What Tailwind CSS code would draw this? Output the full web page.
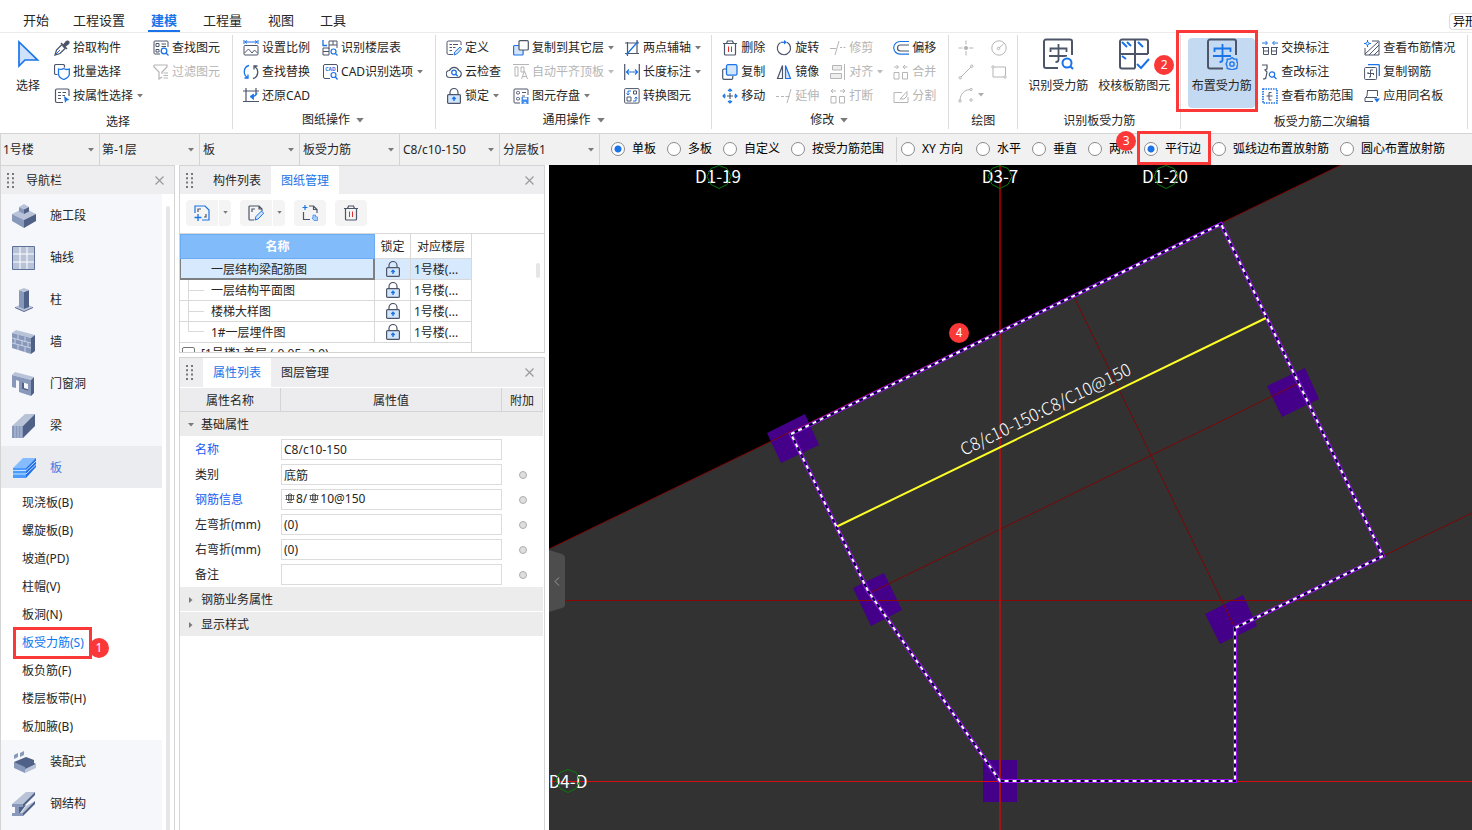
<!DOCTYPE html>
<html lang="zh-CN">
<head>
  <meta charset="UTF-8">
  <meta name="viewport" content="width=device-width, initial-scale=1.0">
  <title>板受力筋 - 建模</title>
  <script src="https://cdn.jsdelivr.net/npm/@tailwindcss/browser@4"></script>
</head>
<body class="flex h-screen flex-col overflow-hidden bg-white font-['Noto_Sans','Noto_Sans_CJK_SC',sans-serif] text-xs leading-4 text-[#262626]">

  <!-- Shared icons -->
  <svg class="hidden">
    <symbol id="lock" viewBox="0 0 16 16" fill="none">
      <path d="M4 7V4.500a4 4 0 0 1 8 0V7" stroke="#4d5569" stroke-width="1.200"/>
      <rect x="1.600" y="6.600" width="12.800" height="8.800" rx="1" fill="#d3e5fb" stroke="#4d5569" stroke-width="1.200"/>
      <path d="M8 13V9.500M6.300 11L8 9.200 9.700 11" stroke="#1a73e8" stroke-width="1.400"/>
    </symbol>
    <symbol id="trash" viewBox="0 0 16 16" fill="none">
      <path d="M1 3.500h14M4.500 3.500l1-2.500h5l1 2.500M2.500 3.500V14a1 1 0 0 0 1 1h9a1 1 0 0 0 1-1V3.500" stroke="#4d5569" stroke-width="1.200"/>
      <path d="M6.500 6.500v5.500M9.500 6.500v5.500" stroke="#e02b2b"/>
    </symbol>
    <symbol id="caret" viewBox="0 0 6 4"><path d="M0 0h6L3 3.500z" fill="#7a7a7a"/></symbol>
    <symbol id="close" viewBox="0 0 9 9"><path d="M.5.5l8 8M8.500.5l-8 8" stroke="#9a9a9a" stroke-width="1.200"/></symbol>
    <symbol id="grip" viewBox="0 0 7 15">
      <path d="M1 0v15M6 0v15" stroke="#777" stroke-width="2" stroke-dasharray="2 2.300"/>
    </symbol>
    <symbol id="rebar" viewBox="0 0 10 12">
      <path d="M5 0v10M2 9.500h6M.5 2.500h9M1.500 2.500v4M8.500 2.500v4M.5 6.500h9M3.500 1v7M6.500 1v7" fill="none" stroke="#444" stroke-width=".8"/>
    </symbol>
  </svg>

  <!-- Menu tabs -->
  <header class="flex h-[33px] shrink-0 items-end border-b border-[#ececec] pl-5 text-[13px]">
    <nav class="flex h-[23px] gap-5">
      <a href="#" class="-mr-0.5 h-full px-[3px] pt-[3px]">开始</a>
      <a href="#" class="h-full px-[3px] pt-[3px]">工程设置</a>
      <a href="#" class="h-full border-b-2 border-[#1a73e8] px-[3px] pt-[3px] font-bold text-[#1a73e8]">建模</a>
      <a href="#" class="h-full px-[3px] pt-[3px]">工程量</a>
      <a href="#" class="h-full px-[3px] pt-[3px]">视图</a>
      <a href="#" class="h-full px-[3px] pt-[3px]">工具</a>
    </nav>
    <button class="mb-0.5 ml-auto h-[17px] w-[23px] overflow-hidden rounded-l border border-r-0 border-[#dcdcdc] pl-[3px] text-left text-xs leading-none whitespace-nowrap text-black">异形</button>
  </header>

  <!-- Ribbon -->
  <section class="flex h-[100px] shrink-0 overflow-x-clip whitespace-nowrap">
    <!-- 选择 -->
    <div class="flex shrink-0 flex-col pt-[3px] pr-3 pl-4">
      <div class="flex h-[72px]">
        <button class="mt-0.5 mr-3.5 flex flex-col items-center gap-2">
          <svg class="h-8 w-6" viewBox="0 0 24 32" fill="none"><path d="M3 4v24l6-6h12.500z" fill="#cfe2fb" stroke="#1a73e8" stroke-width="1.700"/></svg>
          选择
        </button>
        <div class="mr-2.5 flex flex-col">
          <button class="flex h-6 items-center gap-[3px]">
            <svg class="size-4" viewBox="0 0 16 16" fill="none"><path d="M8 4.500L2.500 10 1 15l5-1.500L11.500 8" stroke="#4d5569" stroke-width="1.300"/><path d="M7 3l6 6M9 6l3-4c2-2 4 0 2 2l-4 3z" fill="#4d5569" stroke="#4d5569" stroke-width="1.500"/><path d="M2 14l4-4" stroke="#1a73e8"/></svg>
            拾取构件
          </button>
          <button class="flex h-6 items-center gap-[3px]">
            <svg class="size-4" viewBox="0 0 16 16" fill="none"><path d="M3.500 10.500H2a1.500 1.500 0 0 1-1.500-1.500V2A1.500 1.500 0 0 1 2 .5h7A1.500 1.500 0 0 1 10.500 2v1.500" stroke="#4d5569" stroke-width="1.200"/><path d="M9.800 4.500c2 1.500 3.500 1.200 5.500.5v5c0 2.500-3 4.500-5.500 5.500C7 14.500 4.500 12.500 4.500 10V5c2 .7 3.500.8 5.300-.5z" stroke="#1a73e8" stroke-width="1.300"/></svg>
            批量选择
          </button>
          <button class="flex h-6 items-center gap-[3px]">
            <svg class="size-4" viewBox="0 0 16 16" fill="none"><path d="M9 14.500H3A1.500 1.500 0 0 1 1.500 13V2.500A1.500 1.500 0 0 1 3 1h10.500A1.500 1.500 0 0 1 15 2.500V8M4 4.500h3M8.500 4.500H12M4 7.500h3M8.500 7.500H11M4 10.500h3" stroke="#4d5569" stroke-width="1.200"/><path d="M10 8l5.500 4-2.700.5L11 15z" fill="#1a73e8"/></svg>
            按属性选择
            <svg class="ml-px h-1 w-1.5"><use href="#caret"/></svg>
          </button>
        </div>
        <div class="flex flex-col">
          <button class="flex h-6 items-center gap-[3px]">
            <svg class="size-4" viewBox="0 0 16 16" fill="none"><path d="M7 14H2a1 1 0 0 1-1-1V2a1 1 0 0 1 1-1h12a1 1 0 0 1 1 1v5M8.500 4H13M8.500 6.500H13M3 3.500h3v3H3zM3 9.500h3v2.500H3z" stroke="#4d5569"/><circle cx="11" cy="11" r="2.800" stroke="#1a73e8" stroke-width="1.300"/><path d="M13 13l2.500 2.500" stroke="#1a73e8" stroke-width="1.300"/></svg>
            查找图元
          </button>
          <button class="flex h-6 items-center gap-[3px] text-[#b5b5b5]">
            <svg class="size-4" viewBox="0 0 16 16" fill="none" stroke="#b5b5b5" stroke-width="1.200"><path d="M1 1h13v2L9 8v2M1 1v2l5 5v7l3-2M10.500 9H15M10.500 11.500H15M10.500 14H15"/></svg>
            过滤图元
          </button>
        </div>
      </div>
      <div class="flex h-[26px] items-center justify-center pt-0.5">选择</div>
    </div>
    <div class="mt-0.5 h-[94px] w-px shrink-0 bg-[#dcdcdc]"></div>

    <!-- 图纸操作 -->
    <div class="flex shrink-0 flex-col pt-[3px] pr-3 pl-2.5">
      <div class="flex h-[72px] gap-3">
        <div class="flex flex-col">
          <button class="flex h-6 items-center gap-[3px]">
            <svg class="size-4" viewBox="0 0 16 16" fill="none"><path d="M1 0v4M15 0v4M1.500 2h13M4 .5L2 2l2 1.500M12 .5L14 2l-2 1.500" stroke="#1a73e8"/><rect x="1" y="5.500" width="14" height="9.500" rx="1" stroke="#4d5569"/><path d="M1.500 13l4-4 3.500 4 2.500-3 3 3" stroke="#4d5569"/></svg>
            设置比例
          </button>
          <button class="flex h-6 items-center gap-[3px]">
            <svg class="size-4" viewBox="0 0 16 16" fill="none" stroke-width="1.300"><path d="M6 1.500C0 3 0 11 4.500 13.500M1.500 14h3.500v-3.500" stroke="#1a73e8"/><path d="M10 14.500c6-1.500 6-9.500 1.500-12M14.500 2H11v3.500" stroke="#4d5569"/></svg>
            查找替换
          </button>
          <button class="flex h-6 items-center gap-[3px]">
            <svg class="size-4" viewBox="0 0 16 16" fill="none"><path d="M0 3h16M3 0v14M13 0v6M0 13.500h16" stroke="#4d5569" stroke-width="1.200"/><path d="M14 4.500c0 2.500-1.500 4-4 4M10.500 6l-3.500 2.500 3.500 3z" fill="#1a73e8" stroke="#1a73e8" stroke-width=".8"/></svg>
            还原CAD
          </button>
        </div>
        <div class="flex flex-col">
          <button class="flex h-6 items-center gap-[3px]">
            <svg class="size-4" viewBox="0 0 16 16" fill="none"><path d="M1 0v5.500h4" stroke="#1a73e8" stroke-width="1.300"/><path d="M7 1h8v7M7 1v8M11 1v4M7 5h8M1 8h6v7M1 8v7h6M1 11.500h6" stroke="#4d5569"/><circle cx="11.500" cy="11.500" r="2.500" stroke="#1a73e8" stroke-width="1.200"/><path d="M13.500 13.500l2 2" stroke="#1a73e8" stroke-width="1.300"/></svg>
            识别楼层表
          </button>
          <button class="flex h-6 items-center gap-[3px]">
            <svg class="size-4" viewBox="0 0 16 16" fill="none"><path d="M8 14.500H3A1.500 1.500 0 0 1 1.500 13V2A1.500 1.500 0 0 1 3 .5h11A1.500 1.500 0 0 1 15.500 2v6" stroke="#4d5569"/><text x="8.500" y="7" font-size="5" font-weight="700" text-anchor="middle" fill="#1a73e8">CAD</text><circle cx="11.500" cy="11" r="2.500" stroke="#1a73e8" stroke-width="1.200"/><path d="M13.500 13l2 2.500" stroke="#1a73e8" stroke-width="1.300"/></svg>
            CAD识别选项
            <svg class="ml-px h-1 w-1.5"><use href="#caret"/></svg>
          </button>
        </div>
      </div>
      <div class="flex h-6 items-center justify-center gap-1.5">图纸操作 <svg class="h-[5px] w-2"><use href="#caret"/></svg></div>
    </div>
    <div class="mt-0.5 h-[94px] w-px shrink-0 bg-[#dcdcdc]"></div>

    <!-- 通用操作 -->
    <div class="flex shrink-0 flex-col px-2.5 pt-[3px]">
      <div class="flex h-[72px]">
        <div class="mr-3 flex flex-col">
          <button class="flex h-6 items-center gap-[3px]">
            <svg class="size-4" viewBox="0 0 16 16" fill="none"><path d="M7 14.500H2.500A1.500 1.500 0 0 1 1 13V2.500A1.500 1.500 0 0 1 2.500 1h11A1.500 1.500 0 0 1 15 2.500V5M3.500 4.500H6M7 4.500h5M3.500 7.500H6M7 7.500h2.500M3.500 10.500H6" stroke="#4d5569"/><path d="M8 15l.7-3L14 7l1.700 1.800-5 5.200z" fill="#d3e5fb" stroke="#1a73e8"/></svg>
            定义
          </button>
          <button class="flex h-6 items-center gap-[3px]">
            <svg class="size-4" viewBox="0 0 16 16" fill="none"><path d="M4 13.500a3.500 3.500 0 0 1-.5-7 5 5 0 0 1 9.300 0 3.600 3.600 0 0 1-.8 7z" stroke="#4d5569" stroke-width="1.200"/><circle cx="8" cy="8.500" r="2.300" stroke="#1a73e8" stroke-width="1.300"/><path d="M9.700 10.200l2 2" stroke="#1a73e8" stroke-width="1.300"/></svg>
            云检查
          </button>
          <button class="flex h-6 items-center gap-[3px]">
            <svg class="size-4"><use href="#lock"/></svg>
            锁定
            <svg class="ml-px h-1 w-1.5"><use href="#caret"/></svg>
          </button>
        </div>
        <div class="mr-2.5 flex flex-col">
          <button class="flex h-6 items-center gap-[3px]">
            <svg class="size-4" viewBox="0 0 16 16" fill="none"><rect x=".6" y="5.500" width="9.500" height="9.500" rx="1" fill="#d3e5fb" stroke="#1a73e8" stroke-width="1.200"/><rect x="6" y=".7" width="9.300" height="9.300" rx="1" fill="#fff" stroke="#4d5569" stroke-width="1.200"/></svg>
            复制到其它层
            <svg class="ml-px h-1 w-1.5"><use href="#caret"/></svg>
          </button>
          <button class="flex h-6 items-center gap-[3px] text-[#b5b5b5]">
            <svg class="size-4" viewBox="0 0 16 16" fill="none" stroke="#b5b5b5"><path d="M0 .5h16M2 3h3v9H2zM8 3h3v5H8zM8.500 15l3-8 3 8M9.500 12.500h4"/></svg>
            自动平齐顶板
            <svg class="ml-px h-1 w-1.5 opacity-50"><use href="#caret"/></svg>
          </button>
          <button class="flex h-6 items-center gap-[3px]">
            <svg class="size-4" viewBox="0 0 16 16" fill="none"><path d="M7 15H2a1 1 0 0 1-1-1V2a1 1 0 0 1 1-1h12a1 1 0 0 1 1 1v5M9 4.500h4M9 8h3" stroke="#4d5569"/><rect x="3.500" y="3.500" width="3" height="2.500" rx="1" stroke="#4d5569"/><rect x="3.500" y="9.500" width="3" height="2.500" rx="1" stroke="#4d5569"/><rect x="8.500" y="9" width="7" height="7" fill="#3d8bf0"/><path d="M10 9.500h4v2h-4zM10 15.500l2-2 2 2z" fill="#fff"/></svg>
            图元存盘
            <svg class="ml-px h-1 w-1.5"><use href="#caret"/></svg>
          </button>
        </div>
        <div class="flex flex-col">
          <button class="flex h-6 items-center gap-[3px]">
            <svg class="size-4" viewBox="0 0 16 16" fill="none"><path d="M3.500 2v14M13 0v13M1 3h14M1 13.500h14" stroke="#4d5569" stroke-width="1.200"/><path d="M2.500 14.500L14 1.500" stroke="#1a73e8" stroke-width="1.300"/></svg>
            两点辅轴
            <svg class="ml-px h-1 w-1.5"><use href="#caret"/></svg>
          </button>
          <button class="flex h-6 items-center gap-[3px]">
            <svg class="size-4" viewBox="0 0 16 16" fill="none"><path d="M.7 0v16M15.300 0v16" stroke="#4d5569" stroke-width="1.200"/><path d="M2.500 8h11M5 5.500L2.500 8 5 10.500M11 5.500L13.500 8 11 10.500" stroke="#1a73e8" stroke-width="1.200"/></svg>
            长度标注
            <svg class="ml-px h-1 w-1.5"><use href="#caret"/></svg>
          </button>
          <button class="flex h-6 items-center gap-[3px]">
            <svg class="size-4" viewBox="0 0 16 16" fill="none"><rect x=".6" y=".6" width="14.500" height="14.500" rx="1" stroke="#4d5569"/><path d="M9.500 3h3v3h-3zM3 9h4v4H3z" stroke="#4d5569"/><path d="M7 3H4v4M2.500 5.500L4 7l1.500-1.500M9 13h3V9M10.500 10.500L12 9l1.500 1.500" stroke="#1a73e8"/></svg>
            转换图元
          </button>
        </div>
      </div>
      <div class="flex h-6 items-center justify-center gap-1.5">通用操作 <svg class="h-[5px] w-2"><use href="#caret"/></svg></div>
    </div>
    <div class="mt-0.5 h-[94px] w-px shrink-0 bg-[#dcdcdc]"></div>

    <!-- 修改 -->
    <div class="flex shrink-0 flex-col pt-[3px] pr-3 pl-2.5">
      <div class="flex h-[72px] gap-[11px]">
        <div class="flex flex-col">
          <button class="flex h-6 items-center gap-[3px]"><svg class="size-4"><use href="#trash"/></svg>删除</button>
          <button class="flex h-6 items-center gap-[3px]">
            <svg class="size-4" viewBox="0 0 16 16" fill="none"><path d="M4 5H2a1.300 1.300 0 0 0-1.300 1.300V14A1.300 1.300 0 0 0 2 15.300h7.500a1.300 1.300 0 0 0 1.300-1.300v-2" stroke="#4d5569" stroke-width="1.200"/><rect x="4.500" y=".7" width="10.500" height="10.500" rx="1.500" fill="#d3e5fb" stroke="#1a73e8" stroke-width="1.300"/></svg>
            复制
          </button>
          <button class="flex h-6 items-center gap-[3px]">
            <svg class="size-4" viewBox="0 0 16 16" fill="none"><path d="M8 5v6M5 8h6" stroke="#4d5569" stroke-width="1.200"/><path d="M6 3L8 1l2 2M6 13l2 2 2-2M3 6L1 8l2 2M13 6l2 2-2 2M8 1v3M8 15v-3M1 8h3M15 8h-3" stroke="#1a73e8" stroke-width="1.200"/></svg>
            移动
          </button>
        </div>
        <div class="flex flex-col">
          <button class="flex h-6 items-center gap-[3px]">
            <svg class="size-4" viewBox="0 0 16 16" fill="none"><path d="M11 2.300a6.600 6.600 0 1 1-6.500.2" stroke="#4d5569" stroke-width="1.200"/><path d="M5 2.300h4" stroke="#1a73e8" stroke-width="1.200"/><path d="M8 0l3 2.300L8 4.600z" fill="#1a73e8"/></svg>
            旋转
          </button>
          <button class="flex h-6 items-center gap-[3px]">
            <svg class="size-4" viewBox="0 0 16 16" fill="none"><path d="M6.500 1.500V14.500H1.500z" stroke="#4d5569" stroke-width="1.200"/><path d="M9.500 1.500V14.500h5z" fill="#d3e5fb" stroke="#1a73e8" stroke-width="1.200"/></svg>
            镜像
          </button>
          <button class="flex h-6 items-center gap-[3px] text-[#b5b5b5]">
            <svg class="size-4" viewBox="0 0 16 16" fill="none" stroke="#b5b5b5"><path d="M0 8.500h3M5 8.500h3M9.500 8.500h4M15 1l-4 14"/></svg>
            延伸
          </button>
        </div>
        <div class="flex flex-col text-[#b5b5b5]">
          <button class="flex h-6 items-center gap-[3px]">
            <svg class="size-4" viewBox="0 0 16 16" fill="none" stroke="#b5b5b5"><path d="M0 8.500h6M10 7.500h2M13.500 7.500h2M9 1L5 15"/></svg>
            修剪
          </button>
          <button class="flex h-6 items-center gap-[3px]">
            <svg class="size-4" viewBox="0 0 16 16" fill="#eee" stroke="#b5b5b5"><path d="M14.500 0v16M2.500 1.500h9v4.500h-9zM.5 9.500h11v5H.5z"/></svg>
            对齐
            <svg class="ml-px h-1 w-1.5 opacity-50"><use href="#caret"/></svg>
          </button>
          <button class="flex h-6 items-center gap-[3px]">
            <svg class="size-4" viewBox="0 0 16 16" fill="none" stroke="#b5b5b5"><path d="M1 8.500h5V15H1zM9.500 8.500h5V15h-5zM1 3h5M3 1L1 3l2 2M10 3h5M13 1l2 2-2 2"/></svg>
            打断
          </button>
        </div>
        <div class="-ml-px flex flex-col text-[#b5b5b5]">
          <button class="flex h-6 items-center gap-[3px] text-[#262626]">
            <svg class="size-4" viewBox="0 0 16 16" fill="none"><path d="M16 1.500H7a6.300 6.300 0 0 0 0 12.600h9" stroke="#1a73e8" stroke-width="1.200"/><path d="M16 5H7.500a3 3 0 0 0 0 6H16" stroke="#4d5569" stroke-width="1.200"/></svg>
            偏移
          </button>
          <button class="flex h-6 items-center gap-[3px]">
            <svg class="size-4" viewBox="0 0 16 16" fill="none" stroke="#b5b5b5"><path d="M1 8.500h5V15H1zM9.500 8.500h5V15h-5zM1 3h4M3.500 1l2 2-2 2M10.500 3h4M12 1l-2 2 2 2"/></svg>
            合并
          </button>
          <button class="flex h-6 items-center gap-[3px]">
            <svg class="size-4" viewBox="0 0 16 16" fill="none" stroke="#b5b5b5"><path d="M9 4.500H1v10h14V9M7 11l7-7.500V8l-3 3z"/></svg>
            分割
          </button>
        </div>
      </div>
      <div class="flex h-6 items-center justify-center gap-1.5">修改 <svg class="h-[5px] w-2"><use href="#caret"/></svg></div>
    </div>
    <div class="mt-0.5 h-[94px] w-px shrink-0 bg-[#dcdcdc]"></div>

    <!-- 绘图 -->
    <div class="flex shrink-0 flex-col px-[9px] pt-[3px]">
      <div class="grid h-[72px] grid-cols-[16px_17px] gap-x-[17px]">
        <button aria-label="点"><svg class="size-4" viewBox="0 0 16 16" stroke="#b5b5b5"><path d="M8 .5v4M8 11v4.500M.5 8h4M11 8h4.500"/><circle cx="8" cy="8" r="1.600" fill="#b5b5b5"/></svg></button>
        <button aria-label="圆"><svg class="size-4" viewBox="0 0 16 16" fill="none" stroke="#b5b5b5"><circle cx="8" cy="8" r="7.200"/><path d="M8 8l4.500-4"/><circle cx="7.500" cy="8.500" r="1.200"/></svg></button>
        <button aria-label="直线"><svg class="size-4" viewBox="0 0 16 16" fill="none" stroke="#b5b5b5"><path d="M3 13L13 3"/><circle cx="2.200" cy="13.800" r="1.200"/><circle cx="13.800" cy="2.200" r="1.200"/></svg></button>
        <button aria-label="矩形"><svg class="size-4" viewBox="0 0 16 16" fill="none" stroke="#b5b5b5"><path d="M3.500 3h11v8.500M12.500 13H2V4.500"/><circle cx="2" cy="3" r="1.200"/><circle cx="14" cy="13" r="1.200"/></svg></button>
        <button aria-label="弧" class="flex items-center gap-1">
          <svg class="size-4 shrink-0" viewBox="0 0 16 16" fill="none" stroke="#b5b5b5"><path d="M2 13C2.500 7 6 3 12 2.500"/><circle cx="2" cy="14" r="1.200"/><circle cx="13" cy="2.500" r="1.200"/><circle cx="13" cy="13" r="1.200"/></svg>
          <svg class="h-1 w-1.5 shrink-0 opacity-60"><use href="#caret"/></svg>
        </button>
      </div>
      <div class="flex h-[26px] items-center justify-center pt-0.5">绘图</div>
    </div>
    <div class="mt-0.5 h-[94px] w-px shrink-0 bg-[#dcdcdc]"></div>

    <!-- 识别板受力筋 -->
    <div class="flex shrink-0 flex-col px-2.5 pt-[3px]">
      <div class="flex h-[72px] gap-2.5">
        <button class="mt-0.5 flex flex-col items-center gap-2">
          <svg class="size-8" viewBox="0 0 32 32" fill="none"><path d="M16 30H4a2 2 0 0 1-2-2V3.500a2 2 0 0 1 2-2h24a2 2 0 0 1 2 2V17" stroke="#4d5569" stroke-width="2"/><path d="M16.500 6v16q0 2-3 2M8.500 14v-3.500h16V14M7 18h18" stroke="#4d5569" stroke-width="1.800"/><circle cx="25" cy="25" r="6.500" fill="#fff"/><circle cx="25" cy="25" r="4.500" stroke="#1a73e8" stroke-width="2"/><path d="M28 28l3 3" stroke="#1a73e8" stroke-width="2"/></svg>
          识别受力筋
        </button>
        <button class="relative mt-0.5 flex flex-col items-center gap-2">
          <svg class="size-8" viewBox="0 0 32 32" fill="none"><path d="M17 30.500H4a2 2 0 0 1-2-2v-25a2 2 0 0 1 2-2h24a2 2 0 0 1 2 2V16M17 1.500v29M2 16h28" stroke="#4d5569" stroke-width="2"/><path d="M4 4l5 5M9 4l4 4M20 4l5 5M4 18l4 3M19 26l4 4 8-9" stroke="#1a73e8" stroke-width="2"/></svg>
          校核板筋图元
          <span class="absolute top-[17px] -right-1 flex size-5 items-center justify-center rounded-full bg-[#fb3838] text-white">2</span>
        </button>
      </div>
      <div class="flex h-[26px] items-center justify-center pt-0.5">识别板受力筋</div>
    </div>
    <div class="mt-0.5 h-[94px] w-px shrink-0 bg-[#dcdcdc]"></div>

    <!-- 板受力筋二次编辑 -->
    <div class="flex shrink-0 flex-col pt-[3px] pr-3 pl-[7px]">
      <div class="flex h-[72px]">
        <button class="relative mt-0.5 mr-[7px] flex w-[67px] flex-col items-center gap-2 rounded-sm bg-[#c3daf2]">
          <svg class="size-8" viewBox="0 0 32 32" fill="none"><path d="M17 30.500H4a2 2 0 0 1-2-2v-25a2 2 0 0 1 2-2h24a2 2 0 0 1 2 2V17" stroke="#4d5569" stroke-width="2"/><path d="M16.500 6v16q0 2-3 2M8.500 14v-3.500h16V14M7 18h18" stroke="#1a73e8" stroke-width="1.800"/><path d="M26 19.500l2 1.500 2.800.2.200 2.800 1 2-1 2-.2 2.500-2.800.5-2 1-2-1-2.800-.5-.2-2.500-1-2 1-2 .2-2.800 2.800-.2z" fill="#c3daf2" stroke="#1a73e8" stroke-width="1.300"/><circle cx="26" cy="26" r="2.200" stroke="#1a73e8" stroke-width="1.300"/></svg>
          布置受力筋
          <span class="absolute -top-2 -right-[3px] -bottom-1 -left-3 border-3 border-[#fb3838]"></span>
        </button>
        <div class="mr-[11px] flex flex-col">
          <button class="flex h-6 items-center gap-[3px]">
            <svg class="size-4" viewBox="0 0 16 16" fill="none"><path d="M0 3h5M3.500 1l2 2-2 2M16 3h-5M12.500 1l-2 2 2 2" stroke="#1a73e8"/><path d="M1.500 7.500v7h5v-7zM9.500 7.500v7h5v-7zM0 7.500h7M9 7.500h7M1.500 11h5M9.500 11h5" stroke="#4d5569"/></svg>
            交换标注
          </button>
          <button class="flex h-6 items-center gap-[3px]">
            <svg class="size-4" viewBox="0 0 16 16" fill="none"><path d="M0 1h5v4l-2 1 2 2-1 5q0 2-3 2" stroke="#4d5569" stroke-width="1.200"/><circle cx="10" cy="10.500" r="2.700" stroke="#1a73e8" stroke-width="1.200"/><path d="M12 12.500l2.500 2.500" stroke="#1a73e8" stroke-width="1.300"/></svg>
            查改标注
          </button>
          <button class="flex h-6 items-center gap-[3px]">
            <svg class="size-4" viewBox="0 0 16 16" fill="none"><rect x="1" y="1" width="14" height="14" stroke="#1a73e8" stroke-width="1.700" stroke-dasharray="1.500 1"/><path d="M9.500 4.500H7v7.500h2.500M4.500 8h6" stroke="#4d5569"/></svg>
            查看布筋范围
          </button>
        </div>
        <div class="flex flex-col">
          <button class="flex h-6 items-center gap-[3px]">
            <svg class="size-4" viewBox="0 0 16 16" fill="none"><path d="M8 1h7v14H1V8M1 14L14 2M5 15L15 5M10 15l5-5" stroke="#4d5569"/><circle cx="3.500" cy="3.500" r="1.500" stroke="#1a73e8"/><path d="M3.500 0v2M3.500 5v2M0 3.500h2M5 3.500h2" stroke="#1a73e8"/></svg>
            查看布筋情况
          </button>
          <button class="flex h-6 items-center gap-[3px]">
            <svg class="size-4" viewBox="0 0 16 16" fill="none"><path d="M4 .7h10.500a.8.8 0 0 1 .8.8V12" stroke="#1a73e8" stroke-width="1.300"/><rect x=".6" y="3.500" width="12" height="12" rx="1" stroke="#4d5569"/><path d="M9 6H6.500v7H5M3.500 9.500h6.500M4 8v1.500M9.500 9.500V11" stroke="#4d5569"/></svg>
            复制钢筋
          </button>
          <button class="flex h-6 items-center gap-[3px]">
            <svg class="size-4" viewBox="0 0 16 16" fill="none"><path d="M3 2.500h10.500V8M1 9.500h12M3.500 2.500L3 8l-2 2v3.500h8" stroke="#4d5569"/><path d="M10 10.500h6l-3 4z" fill="#1a73e8"/></svg>
            应用同名板
          </button>
        </div>
      </div>
      <div class="flex h-[26px] items-center justify-center pt-0.5">板受力筋二次编辑</div>
    </div>
    <div class="mt-0.5 h-[94px] w-px shrink-0 bg-[#dcdcdc]"></div>
  </section>

  <!-- Option bar -->
  <section class="flex h-8 shrink-0 items-stretch border-t border-[#d4d4d4] bg-[#f1f1f1] whitespace-nowrap">
    <label class="relative flex w-[100px] shrink-0 items-center border-x border-[#d4d4d4]">
      <select aria-label="楼栋" class="h-full w-full appearance-none pl-0.5 outline-none"><option>1号楼</option></select>
      <svg class="pointer-events-none absolute right-[5px] h-1 w-1.5"><use href="#caret"/></svg>
    </label>
    <label class="relative flex w-[100px] shrink-0 items-center border-r border-[#d4d4d4]">
      <select aria-label="楼层" class="h-full w-full appearance-none pl-0.5 outline-none"><option>第-1层</option></select>
      <svg class="pointer-events-none absolute right-[5px] h-1 w-1.5"><use href="#caret"/></svg>
    </label>
    <label class="relative flex w-[100px] shrink-0 items-center border-r border-[#d4d4d4]">
      <select aria-label="构件类别" class="h-full w-full appearance-none pl-[3px] outline-none"><option>板</option></select>
      <svg class="pointer-events-none absolute right-[5px] h-1 w-1.5"><use href="#caret"/></svg>
    </label>
    <label class="relative flex w-[100px] shrink-0 items-center border-r border-[#d4d4d4]">
      <select aria-label="构件类型" class="h-full w-full appearance-none pl-[3px] outline-none"><option>板受力筋</option></select>
      <svg class="pointer-events-none absolute right-[5px] h-1 w-1.5"><use href="#caret"/></svg>
    </label>
    <label class="relative flex w-[100px] shrink-0 items-center border-r border-[#d4d4d4]">
      <select aria-label="构件" class="h-full w-full appearance-none pl-[3px] outline-none"><option>C8/c10-150</option></select>
      <svg class="pointer-events-none absolute right-[5px] h-1 w-1.5"><use href="#caret"/></svg>
    </label>
    <label class="relative flex w-[100px] shrink-0 items-center border-r border-[#d4d4d4]">
      <select aria-label="分层" class="h-full w-full appearance-none pl-[3px] outline-none"><option>分层板1</option></select>
      <svg class="pointer-events-none absolute right-[5px] h-1 w-1.5"><use href="#caret"/></svg>
    </label>

    <div class="flex items-center gap-[11px] pr-3 pb-0.5 pl-[11px] text-black">
      <label class="flex items-center gap-[7px]"><input type="radio" name="range" checked class="size-3.5 appearance-none rounded-full border border-[#8a8a8a] bg-white checked:bg-[radial-gradient(circle,#1a73e8_0_3px,#fff_4px)]">单板</label>
      <label class="flex items-center gap-[7px]"><input type="radio" name="range" class="size-3.5 appearance-none rounded-full border border-[#8a8a8a] bg-white checked:bg-[radial-gradient(circle,#1a73e8_0_3px,#fff_4px)]">多板</label>
      <label class="flex items-center gap-[7px]"><input type="radio" name="range" class="size-3.5 appearance-none rounded-full border border-[#8a8a8a] bg-white checked:bg-[radial-gradient(circle,#1a73e8_0_3px,#fff_4px)]">自定义</label>
      <label class="flex items-center gap-[7px]"><input type="radio" name="range" class="size-3.5 appearance-none rounded-full border border-[#8a8a8a] bg-white checked:bg-[radial-gradient(circle,#1a73e8_0_3px,#fff_4px)]">按受力筋范围</label>
    </div>
    <div class="my-[3px] w-px shrink-0 bg-[#d0d0d0]"></div>
    <div class="flex items-center gap-[11px] pb-0.5 pl-1 text-black">
      <label class="flex items-center gap-[7px] pr-0.5"><input type="radio" name="direction" class="size-3.5 appearance-none rounded-full border border-[#8a8a8a] bg-white checked:bg-[radial-gradient(circle,#1a73e8_0_3px,#fff_4px)]">XY 方向</label>
      <label class="flex items-center gap-[7px]"><input type="radio" name="direction" class="size-3.5 appearance-none rounded-full border border-[#8a8a8a] bg-white checked:bg-[radial-gradient(circle,#1a73e8_0_3px,#fff_4px)]">水平</label>
      <label class="flex items-center gap-[7px]"><input type="radio" name="direction" class="size-3.5 appearance-none rounded-full border border-[#8a8a8a] bg-white checked:bg-[radial-gradient(circle,#1a73e8_0_3px,#fff_4px)]">垂直</label>
      <label class="flex items-center gap-[7px]"><input type="radio" name="direction" class="size-3.5 appearance-none rounded-full border border-[#8a8a8a] bg-white checked:bg-[radial-gradient(circle,#1a73e8_0_3px,#fff_4px)]">两点</label>
      <label class="relative flex items-center gap-[7px]"><input type="radio" name="direction" checked class="size-3.5 appearance-none rounded-full border border-[#8a8a8a] bg-white checked:bg-[radial-gradient(circle,#1a73e8_0_3px,#fff_4px)]">平行边
        <span class="absolute -top-2.5 -right-2.5 -bottom-2 -left-[7px] border-3 border-[#fb3838]"></span>
        <span class="absolute -top-2.5 -left-7 flex size-5 items-center justify-center rounded-full bg-[#fb3838] text-white">3</span>
      </label>
      <label class="flex items-center gap-[7px]"><input type="radio" name="direction" class="size-3.5 appearance-none rounded-full border border-[#8a8a8a] bg-white checked:bg-[radial-gradient(circle,#1a73e8_0_3px,#fff_4px)]">弧线边布置放射筋</label>
      <label class="flex items-center gap-[7px]"><input type="radio" name="direction" class="size-3.5 appearance-none rounded-full border border-[#8a8a8a] bg-white checked:bg-[radial-gradient(circle,#1a73e8_0_3px,#fff_4px)]">圆心布置放射筋</label>
    </div>
  </section>

  <main class="flex min-h-0 flex-1 gap-1">
    <!-- Navigation -->
    <aside class="flex w-[175px] shrink-0 flex-col border-x border-t border-[#d4d4d4]">
      <div class="flex h-7 shrink-0 items-center bg-[#eeeef0] pt-px pr-2.5 pl-1.5">
        <svg class="mr-3 h-[15px] w-[7px]"><use href="#grip"/></svg>
        导航栏
        <button class="ml-auto" aria-label="关闭"><svg class="size-[9px]"><use href="#close"/></svg></button>
      </div>
      <div class="flex min-h-0 flex-1">
        <ul class="min-w-0 flex-1 overflow-hidden bg-[#f5f7fa]">
          <li><a href="#" class="flex h-[42px] items-center gap-3.5 pt-px pl-[11px]">
            <svg class="size-6" viewBox="0 0 24 24"><path d="M0 10l12-6 12 6-12 6z" fill="#b9c3d8"/><path d="M0 10l12 6v8L0 17z" fill="#8798bb"/><path d="M24 10l-12 6v8l12-7z" fill="#4f6187"/><path d="M7 3l5-3 5 3-5 2.500z" fill="#b9c3d8"/><path d="M7 3l5 2.500V10L7 7.500z" fill="#8798bb"/><path d="M17 3l-5 2.500V10l5-2.500z" fill="#4f6187"/></svg>
            施工段</a></li>
          <li><a href="#" class="flex h-[42px] items-center gap-3.5 pt-px pl-[11px]">
            <svg class="size-6" viewBox="0 0 24 24"><path d="M.5.5h22v23H.5z" fill="#b9c3d8" stroke="#5f7199"/><path d="M8 1v22M15 1v22M1 8h21M1 16h21" stroke="#fff"/></svg>
            轴线</a></li>
          <li><a href="#" class="flex h-[42px] items-center gap-3.5 pt-px pl-[11px]">
            <svg class="size-6" viewBox="0 0 24 24"><path d="M3 19l9-4 9 4-9 4z" fill="#b9c3d8"/><path d="M3 19l9 4 9-4v1l-9 4-9-4z" fill="#4f6187"/><path d="M7 2l5 2v17l-5-2z" fill="#8798bb"/><path d="M17 2l-5 2v17l5-2z" fill="#4f6187"/><path d="M7 2l5-2 5 2-5 2z" fill="#b9c3d8"/></svg>
            柱</a></li>
          <li><a href="#" class="flex h-[42px] items-center gap-3.5 pt-px pl-[11px]">
            <svg class="size-6" viewBox="0 0 24 24"><path d="M0 3l4-3 19 5-4 3z" fill="#b9c3d8"/><path d="M0 3l19 5v16L0 18z" fill="#8798bb"/><path d="M19 8l4-3v16l-4 3z" fill="#4f6187"/><path d="M0 8l19 5M0 13l19 5M6 5v5M13 7v5M3 9v5M10 11v5M16 12v5M6 15v5M13 17v5" stroke="#c9d1e2" fill="none"/></svg>
            墙</a></li>
          <li><a href="#" class="flex h-[42px] items-center gap-3.5 pt-px pl-[11px]">
            <svg class="size-6" viewBox="0 0 24 24"><path d="M0 3l3-3 19 5-3 3z" fill="#b9c3d8"/><path fill-rule="evenodd" d="M0 3l19 5v16l-12-4V9L4 8v8l-4-1zM10 10v7l6 2v-7z" fill="#8798bb"/><path d="M19 8l3-3v16l-3 3zM10 10l2 .7V16l4 1.300V19l-6-2z" fill="#4f6187"/></svg>
            门窗洞</a></li>
          <li><a href="#" class="flex h-[42px] items-center gap-3.5 pt-px pl-[11px]">
            <svg class="size-6" viewBox="0 0 24 24"><path d="M0 12L13 0h10L11 12z" fill="#b9c3d8"/><path d="M0 12h11v12H0z" fill="#8798bb"/><path d="M11 12L23 0v12L11 24z" fill="#4f6187"/><path d="M3 12v12M6 12v12M9 12v12" stroke="#b9c3d8"/></svg>
            梁</a></li>
          <li>
            <a href="#" class="flex h-[42px] items-center gap-3.5 bg-[#ebecf0] pt-px pl-[11px] text-[#4577e0]">
              <svg class="size-6" viewBox="0 0 24 24"><path d="M1 12L11 2h13L14 12z" fill="#84bcff"/><path d="M1 12h13v10H1z" fill="#4c9cff"/><path d="M14 12L24 2v9L14 22z" fill="#1f6fe5"/><path d="M1 14.500h13L24 5M1 18h13L24 8.500" stroke="#c6e0ff" fill="none"/></svg>
              板</a>
            <ul class="bg-white">
              <li><a href="#" class="flex h-7 items-center pt-0.5 pl-[21px]">现浇板(B)</a></li>
              <li><a href="#" class="flex h-7 items-center pt-0.5 pl-[21px]">螺旋板(B)</a></li>
              <li><a href="#" class="flex h-7 items-center pt-0.5 pl-[21px]">坡道(PD)</a></li>
              <li><a href="#" class="flex h-7 items-center pt-0.5 pl-[21px]">柱帽(V)</a></li>
              <li><a href="#" class="flex h-7 items-center pt-0.5 pl-[21px]">板洞(N)</a></li>
              <li><a href="#" class="relative flex h-7 items-center pt-0.5 pl-[21px] text-[#0a78f0]">板受力筋(S)
                <span class="absolute -top-px left-3 h-8 w-[79px] border-3 border-[#fb3838]"></span>
                <span class="absolute top-2.5 left-[88px] flex size-5 items-center justify-center rounded-full bg-[#fb3838] text-white">1</span></a></li>
              <li><a href="#" class="flex h-7 items-center pt-0.5 pl-[21px]">板负筋(F)</a></li>
              <li><a href="#" class="flex h-7 items-center pt-0.5 pl-[21px]">楼层板带(H)</a></li>
              <li><a href="#" class="flex h-7 items-center pt-0.5 pl-[21px]">板加腋(B)</a></li>
            </ul>
          </li>
          <li><a href="#" class="flex h-[42px] items-center gap-3.5 pt-px pl-[11px]">
            <svg class="size-6" viewBox="0 0 24 24"><path d="M2 12l12-5 8 3v3l2 1-11 6-11-5z" fill="#4f6187"/><path d="M2 12l11 5v6L2 18z" fill="#8798bb"/><path d="M13 19l11-5v4l-11 5z" fill="#b9c3d8"/><path d="M2 5l4-2v4l-4 2zM8 3l4-2v4L8 7z" fill="#8798bb"/></svg>
            装配式</a></li>
          <li><a href="#" class="flex h-[42px] items-center gap-3.5 pt-px pl-[11px]">
            <svg class="size-6" viewBox="0 0 24 24"><path d="M0 12L14 0h9L11 12z" fill="#b9c3d8"/><path d="M11 12L23 0v3L11 15zM7 15h2l5-2-6 8H7z" fill="#4f6187"/><path d="M0 12h11v3H7v6h4v3H0v-3h3v-6H0z" fill="#8798bb"/><path d="M9 21l5-7 9-5-12 12z" fill="#b9c3d8"/><path d="M11 21L23 9v3L11 24z" fill="#4f6187"/></svg>
            钢结构</a></li>
        </ul>
        <div class="mt-3 mr-1 ml-1 w-1 shrink-0 rounded-t bg-[#e6e6e8]"></div>
      </div>
    </aside>

    <!-- Drawings and properties -->
    <div class="flex w-[366px] shrink-0 flex-col gap-1">
      <section class="flex h-[188px] shrink-0 flex-col overflow-hidden border border-[#d4d4d4]">
        <div class="flex h-7 shrink-0 items-center bg-[#eeeef0] pr-2.5 pl-1.5">
          <svg class="mr-2.5 h-[15px] w-[7px]"><use href="#grip"/></svg>
          <button class="h-full px-2.5 pt-0.5">构件列表</button>
          <button class="h-full bg-white px-2.5 pt-0.5 text-[#1a73e8]">图纸管理</button>
          <button class="ml-auto" aria-label="关闭"><svg class="size-[9px]"><use href="#close"/></svg></button>
        </div>
        <div class="flex h-10 shrink-0 items-center gap-[9px] border-b border-[#d9d9d9] pb-0.5 pl-1.5">
          <div class="flex h-[26px] gap-px">
            <button class="flex w-8 items-center justify-center rounded-l bg-[#f4f4f5]" aria-label="添加图纸"><svg class="size-4" viewBox="0 0 16 16" fill="none"><path d="M1 8V1h10l4 4v10H8" stroke="#1a73e8" stroke-width="1.200"/><path d="M4 7V4h3M12 9v3h-2" stroke="#4d5569" stroke-width="1.200"/><path d="M4 9v7M.5 12.500h7" stroke="#1a73e8" stroke-width="1.300"/></svg></button>
            <button class="flex w-3 items-center justify-center rounded-r bg-[#f4f4f5]" aria-label="更多添加"><svg class="h-[3px] w-[5px]"><use href="#caret"/></svg></button>
          </div>
          <div class="flex h-[26px] gap-px">
            <button class="flex w-8 items-center justify-center rounded-l bg-[#f4f4f5]" aria-label="编辑图纸"><svg class="size-4" viewBox="0 0 16 16" fill="none"><path d="M6 15H2a1 1 0 0 1-1-1V2a1 1 0 0 1 1-1h9l3 3v2M11 1v3h3M4 7V4h3" stroke="#4d5569" stroke-width="1.200"/><path d="M7 15l1-3.500L13.500 6l2.200 2.200L10 14z" fill="#d3e5fb" stroke="#1a73e8"/></svg></button>
            <button class="flex w-3 items-center justify-center rounded-r bg-[#f4f4f5]" aria-label="更多编辑"><svg class="h-[3px] w-[5px]"><use href="#caret"/></svg></button>
          </div>
          <button class="flex h-[26px] w-8 items-center justify-center rounded bg-[#f4f4f5]" aria-label="自动分割"><svg class="size-4" viewBox="0 0 16 16" fill="none"><path d="M1.500 7v7.500H8M7 1h4.500L15 4.500V8M11.500 1v3.500H15" stroke="#4d5569" stroke-width="1.200"/><path d="M3 0v5M.5 2.500h5" stroke="#1a73e8" stroke-width="1.200"/><path d="M11 10v2.500l-1 .5 2 2.500h3.500V12l-2-.5V10z" fill="#a9cdfa" stroke="#1a73e8" stroke-width=".6"/></svg></button>
          <button class="flex h-[26px] w-8 items-center justify-center rounded bg-[#f4f4f5]" aria-label="删除图纸"><svg class="size-4"><use href="#trash"/></svg></button>
        </div>
        <div class="relative min-h-0 flex-1 overflow-hidden">
          <table class="w-[292px] table-fixed border-separate border-spacing-0">
            <thead>
              <tr class="h-[25px]">
                <th class="w-[195px] border border-[#6aabf3] bg-[#82bbfa] p-0 font-bold text-white">名称</th>
                <th class="w-9 border-r border-b border-[#d9d9d9] p-0 pt-0.5 font-normal">锁定</th>
                <th class="w-[61px] border-r border-b border-[#d9d9d9] p-0 pt-0.5 font-normal">对应楼层</th>
              </tr>
            </thead>
            <tbody>
              <tr class="h-[21px] bg-[#d6e9fd]">
                <td class="border-r-2 border-b-2 border-l border-[#7d7f80] pt-0.5 pr-0 pb-0 pl-[30px]">一层结构梁配筋图</td>
                <td class="border-r border-b border-[#d9d9d9] p-0"><svg class="mx-auto size-4"><use href="#lock"/></svg></td>
                <td class="border-r border-b border-[#d9d9d9] pt-0.5 pr-0 pb-0 pl-[3px]">1号楼(...</td>
              </tr>
              <tr class="h-[21px]">
                <td class="border-r border-b border-[#d9d9d9] p-0"><div class="flex h-5 items-center"><i class="ml-2 h-5 w-4 border-l border-[#d9d9d9]"></i><i class="-ml-4 h-px w-4 bg-[#d9d9d9]"></i><span class="pt-0.5 pl-[7px]">一层结构平面图</span></div></td>
                <td class="border-r border-b border-[#d9d9d9] p-0"><svg class="mx-auto size-4"><use href="#lock"/></svg></td>
                <td class="border-r border-b border-[#d9d9d9] pt-0.5 pr-0 pb-0 pl-[3px]">1号楼(...</td>
              </tr>
              <tr class="h-[21px]">
                <td class="border-r border-b border-[#d9d9d9] p-0"><div class="flex h-5 items-center"><i class="ml-2 h-5 w-4 border-l border-[#d9d9d9]"></i><i class="-ml-4 h-px w-4 bg-[#d9d9d9]"></i><span class="pt-0.5 pl-[7px]">楼梯大样图</span></div></td>
                <td class="border-r border-b border-[#d9d9d9] p-0"><svg class="mx-auto size-4"><use href="#lock"/></svg></td>
                <td class="border-r border-b border-[#d9d9d9] pt-0.5 pr-0 pb-0 pl-[3px]">1号楼(...</td>
              </tr>
              <tr class="h-[21px]">
                <td class="border-r border-b border-[#d9d9d9] p-0"><div class="flex h-5 items-center"><i class="mb-2.5 ml-2 h-2.5 w-4 border-b border-l border-[#d9d9d9]"></i><span class="pt-0.5 pl-[7px]">1#一层埋件图</span></div></td>
                <td class="border-r border-b border-[#d9d9d9] p-0"><svg class="mx-auto size-4"><use href="#lock"/></svg></td>
                <td class="border-r border-b border-[#d9d9d9] pt-0.5 pr-0 pb-0 pl-[3px]">1号楼(...</td>
              </tr>
              <tr class="h-[21px]">
                <td colspan="3" class="border-r border-[#d9d9d9] py-0 pr-0 pl-0.5">
                  <label class="flex items-center gap-1.5"><input type="checkbox" class="size-[13px] appearance-none rounded-xs border border-[#777]">[1号楼] 首层 (-0.05~2.9)</label>
                </td>
              </tr>
            </tbody>
          </table>
          <div class="absolute top-[29px] right-1 h-[15px] w-1 rounded bg-[#e6e6e8]"></div>
        </div>
      </section>

      <section class="flex min-h-0 flex-1 flex-col border border-b-0 border-[#d4d4d4]">
        <div class="mb-px flex h-[29px] shrink-0 items-center bg-[#eeeef0] pr-2.5 pl-1.5">
          <svg class="mr-2.5 h-[15px] w-[7px]"><use href="#grip"/></svg>
          <button class="h-full bg-white px-2.5 text-[#1a73e8]">属性列表</button>
          <button class="h-full px-2.5">图层管理</button>
          <button class="ml-auto" aria-label="关闭"><svg class="size-[9px]"><use href="#close"/></svg></button>
        </div>
        <table class="mr-px table-fixed border-separate border-spacing-0">
          <thead>
            <tr class="h-6 bg-[#ececee]">
              <th class="w-[101px] border-r border-b border-[#d4d4d4] p-0 pt-0.5 font-normal">属性名称</th>
              <th class="border-r border-b border-[#d4d4d4] p-0 pt-0.5 font-normal">属性值</th>
              <th class="w-[41px] border-r border-b border-[#d4d4d4] p-0 pt-0.5 font-normal">附加</th>
            </tr>
          </thead>
          <tbody>
            <tr class="h-[25px]">
              <td colspan="3" class="border-b border-white bg-[#ececec] p-0 pt-0.5"><button class="flex items-center gap-[7px] pl-2"><svg class="h-1 w-1.5"><use href="#caret"/></svg>基础属性</button></td>
            </tr>
            <tr class="h-[25px]">
              <td class="py-0 pr-0 pl-[15px] text-[#1a5cf0]"><label for="name">名称</label></td>
              <td class="p-0"><input id="name" value="C8/c10-150" class="block h-[21px] w-[221px] border border-[#dcdcdc] px-0.5"></td>
              <td></td>
            </tr>
            <tr class="h-[25px]">
              <td class="py-0 pr-0 pl-[15px]"><label for="kind">类别</label></td>
              <td class="p-0"><input id="kind" value="底筋" class="block h-[21px] w-[221px] border border-[#dcdcdc] px-0.5"></td>
              <td class="p-0"><input type="radio" aria-label="附加类别" class="mx-auto block size-2 appearance-none rounded-full border border-[#aeaeae] bg-[#dedede]"></td>
            </tr>
            <tr class="h-[25px]">
              <td id="rebar-label" class="py-0 pr-0 pl-[15px] text-[#1a5cf0]">钢筋信息</td>
              <td class="p-0"><div role="textbox" aria-labelledby="rebar-label" tabindex="0" class="flex h-[21px] w-[221px] items-center gap-px border border-[#dcdcdc] px-[3px] pb-0.5"><svg class="h-3 w-2.5"><use href="#rebar"/></svg>8/<svg class="ml-px h-3 w-2.5"><use href="#rebar"/></svg>10@150</div></td>
              <td class="p-0"><input type="radio" aria-label="附加钢筋信息" class="mx-auto block size-2 appearance-none rounded-full border border-[#aeaeae] bg-[#dedede]"></td>
            </tr>
            <tr class="h-[25px]">
              <td class="py-0 pr-0 pl-[15px]"><label for="left-bend">左弯折(mm)</label></td>
              <td class="p-0"><input id="left-bend" value="(0)" class="block h-[21px] w-[221px] border border-[#dcdcdc] px-0.5"></td>
              <td class="p-0"><input type="radio" aria-label="附加左弯折" class="mx-auto block size-2 appearance-none rounded-full border border-[#aeaeae] bg-[#dedede]"></td>
            </tr>
            <tr class="h-[25px]">
              <td class="py-0 pr-0 pl-[15px]"><label for="right-bend">右弯折(mm)</label></td>
              <td class="p-0"><input id="right-bend" value="(0)" class="block h-[21px] w-[221px] border border-[#dcdcdc] px-0.5"></td>
              <td class="p-0"><input type="radio" aria-label="附加右弯折" class="mx-auto block size-2 appearance-none rounded-full border border-[#aeaeae] bg-[#dedede]"></td>
            </tr>
            <tr class="h-[25px]">
              <td class="py-0 pr-0 pl-[15px]"><label for="remark">备注</label></td>
              <td class="p-0"><input id="remark" value="" class="block h-[21px] w-[221px] border border-[#dcdcdc] px-0.5"></td>
              <td class="p-0"><input type="radio" aria-label="附加备注" class="mx-auto block size-2 appearance-none rounded-full border border-[#aeaeae] bg-[#dedede]"></td>
            </tr>
            <tr class="h-[25px]">
              <td colspan="3" class="border-b border-white bg-[#ececec] p-0 pt-0.5"><button class="flex items-center gap-[7px] pl-2"><svg class="h-1 w-1.5 -rotate-90"><use href="#caret"/></svg>钢筋业务属性</button></td>
            </tr>
            <tr class="h-[25px]">
              <td colspan="3" class="border-b border-white bg-[#ececec] p-0 pt-0.5"><button class="flex items-center gap-[7px] pl-2"><svg class="h-1 w-1.5 -rotate-90"><use href="#caret"/></svg>显示样式</button></td>
            </tr>
          </tbody>
        </table>
      </section>
    </div>

    <!-- Model view -->
    <section class="min-w-0 flex-1 overflow-hidden bg-[#323232]">
      <svg class="h-full w-full font-['Noto_Sans_CJK_SC',sans-serif]" viewBox="549 165 923 665" preserveAspectRatio="xMinYMin slice" fill="none">
        <path d="M549 165H1341L549 549z" fill="#000"/>
        <!-- columns -->
        <g fill="#440088">
          <path d="M767 433l38-19 14 31-38 18z"/>
          <path d="M853 588l31-15 18 37-31 16z"/>
          <path d="M1267 386l38-18 14 31-37 18z"/>
          <path d="M1205 614l38-19 14 31-37 18z"/>
          <path d="M983 760h34v42h-34z"/>
        </g>
        <!-- axes -->
        <g stroke="#7c0606">
          <path d="M549 549L1341 165M872 592L1297 384M1074 297l161 331M1383 556l89-43"/>
          <path d="M549 600.500h923" stroke="#8a0505"/>
          <path d="M549 781.500h923" stroke="#d80c0c"/>
        </g>
        <path d="M1000 165v167" stroke="#860000" stroke-width="2"/>
        <path d="M1000 332v498" stroke="#a01414" stroke-width="2"/>
        <!-- slab outline -->
        <path d="M791 434L1221 224 1383 556 1235 628V781H1000L868 591z" stroke="#9a10f0" stroke-width="4"/>
        <path d="M791 434L1221 224 1383 556 1235 628V781H1000L868 591z" stroke="#000030" stroke-width="2"/>
        <path d="M791 434L1221 224 1383 556 1235 628V781H1000L868 591z" stroke="#fff" stroke-width="2" stroke-dasharray="4 4"/>
        <path d="M837 526.500L1266 318" stroke="#ffff28" stroke-width="2"/>
        <text x="964" y="456" font-size="17" font-weight="300" fill="#fff" transform="rotate(-26 964 456)">C8/c10-150:C8/C10@150</text>
        <!-- axis numbers -->
        <g font-size="17" fill="#fff" text-anchor="middle">
          <text x="718" y="183">D1-19</text>
          <text x="1000" y="183">D3-7</text>
          <text x="1165" y="183">D1-20</text>
          <text x="568" y="788">D4-D</text>
        </g>
        <g stroke="#0a7a0a">
          <path d="M719 165.500l8 3 4 8-4 8-8 4-8-4-4-8 4-8z"/>
          <path d="M1000 165.500l8 3 4 8-4 8-8 4-8-4-4-8 4-8z"/>
          <path d="M1166 165.500l8 3 4 8-4 8-8 4-8-4-4-8 4-8z"/>
          <path d="M568 769.500l8 3 4 8-4 8-8 4-8-4-4-8 4-8z"/>
        </g>
        <circle cx="959" cy="333" r="10" fill="#fb3838"/>
        <text x="959" y="337" font-size="12" fill="#fff" text-anchor="middle">4</text>
        <!-- collapse handle -->
        <path d="M549 550l13 4q3 1 3 4v46q0 3-3 4l-13 4z" fill="#4d4d4d"/>
        <path d="M559 577.500l-4 4 4 4" stroke="#999"/>
      </svg>
    </section>
  </main>
</body>
</html>
